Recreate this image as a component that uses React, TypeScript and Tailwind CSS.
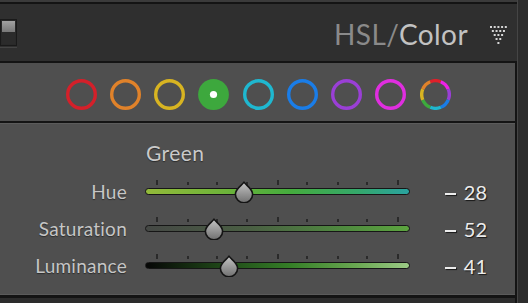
import React from "react";

const font = { fontFamily: "Lato, 'Open Sans', sans-serif" };

function Ring({ color }: { color: string }) {
  return (
    <svg width="31" height="31" viewBox="0 0 31 31">
      <circle cx="15.5" cy="15.5" r="13.8" fill="none" stroke={color} strokeWidth="3.4" />
    </svg>
  );
}

function GreenSel() {
  return (
    <svg width="31" height="31" viewBox="0 0 31 31">
      <circle cx="15.5" cy="15.5" r="15.4" fill="#3da83d" />
      <circle cx="15.5" cy="15.5" r="3.6" fill="#ffffff" />
    </svg>
  );
}

function AllRing() {
  const cols = ["#e0202a", "#ee22e6", "#9a3fd6", "#1a7de8", "#1fb8d0", "#3daa3d", "#d8b421", "#e0822a"];
  const r = 13.8;
  const segs = cols.map((c, i) => {
    const a0 = ((i * 45 - 22.5 - 90) * Math.PI) / 180;
    const a1 = ((i * 45 + 22.5 - 90) * Math.PI) / 180;
    const x0 = 15.5 + r * Math.cos(a0);
    const y0 = 15.5 + r * Math.sin(a0);
    const x1 = 15.5 + r * Math.cos(a1);
    const y1 = 15.5 + r * Math.sin(a1);
    return (
      <path
        key={i}
        d={`M${x0} ${y0} A${r} ${r} 0 0 1 ${x1} ${y1}`}
        fill="none"
        stroke={c}
        strokeWidth="3.4"
      />
    );
  });
  return (
    <svg width="31" height="31" viewBox="0 0 31 31">
      {segs}
    </svg>
  );
}

function Triangle() {
  const dots: React.ReactNode[] = [];
  for (let row = 0; row < 5; row++) {
    const n = 5 - row;
    for (let i = 0; i < n; i++) {
      dots.push(
        <rect key={`${row}-${i}`} x={row * 1.85 + i * 3.7} y={row * 4} width="2" height="2" fill="#d6d6d6" />
      );
    }
  }
  return (
    <svg width="17" height="18" viewBox="0 0 17 18">
      {dots}
    </svg>
  );
}

function Thumb() {
  return (
    <svg width="22" height="22" viewBox="0 0 22 22">
      <defs>
        <linearGradient id="tg" x1="0" y1="0" x2="0" y2="1">
          <stop offset="0" stopColor="#c4c4c4" />
          <stop offset="1" stopColor="#707070" />
        </linearGradient>
      </defs>
      <path
        d="M11 1.2 C12.8 4.2 19.6 7.4 19.6 13.2 A8.6 8.6 0 0 1 2.4 13.2 C2.4 7.4 9.2 4.2 11 1.2 Z"
        fill="url(#tg)"
        stroke="#141414"
        strokeWidth="1.6"
        strokeLinejoin="round"
      />
    </svg>
  );
}

const ticks = [12, 43, 72, 102, 133, 162, 193, 222, 253];

function SliderRow({
  label,
  value,
  gradient,
  pos,
}: {
  label: string;
  value: string;
  gradient: string;
  pos: number;
}) {
  return (
    <div className="flex h-[37px] items-center">
      <div
        className="w-[127px] text-right text-[19px] leading-[20px] tracking-[0.25px] text-[#c6c6c6]"
        style={{ ...font, textShadow: "0 1px 1px rgba(0,0,0,0.45)" }}
      >
        {label}
      </div>
      <div className="relative ml-[18px] flex h-[37px] w-[265px] items-center">
        <div className="h-[7px] w-full rounded-full border border-[#161616]" style={{ background: gradient }} />
        {ticks.map((t, i) => {
          const tall = i === 0 || i === 4 || i === 8;
          return (
            <div
              key={t}
              className={
                tall
                  ? "absolute top-[7px] h-[5px] w-[2px] bg-[#2a2a2a]"
                  : "absolute top-[9px] h-[3px] w-[2px] bg-[#2a2a2a]"
              }
              style={{ left: t - 1 }}
            />
          );
        })}
        <div className="absolute top-[7.5px]" style={{ left: pos - 11 }}>
          <Thumb />
        </div>
      </div>
      <div
        className="flex w-[77px] items-center justify-end text-[20px] leading-[20px] text-[#ececec]"
        style={{ ...font, textShadow: "1px 1px 1px rgba(0,0,0,0.7)" }}
      >
        <span className="mr-[8px] mt-[5px] inline-block h-[2px] w-[11px] bg-[#ececec] shadow-[1px_1px_1px_rgba(0,0,0,0.7)]" />
        <span>{value}</span>
      </div>
    </div>
  );
}

export default function App() {
  return (
    <div className="flex h-[303px] w-[528px] overflow-hidden bg-[#2c2c2c]">
      <div className="flex w-[517px] flex-col">
        <div className="h-[2px] bg-[#3b3b3b]" />
        <div className="h-[2px] bg-[#141414]" />
        <div className="relative flex h-[57px] items-center justify-end bg-[#2f2f2f] pr-[10px]">
          <div className="absolute left-0 top-[15px] h-[29px] w-[17px] border-b border-[#444444]">
            <div className="flex h-[27px] w-[17px] flex-col border border-[#1a1a1a] bg-[#292929] p-[1px]">
              <div className="h-[11px] w-full bg-gradient-to-b from-[#a2a2a2] to-[#787878]" />
              <div className="flex-1 bg-[#2b2b2b]" />
            </div>
          </div>
          <div className="mt-[3px] text-[28px] leading-[28px] tracking-[0.4px]" style={font}>
            <span className="text-[#8a8a8a]">HSL</span>
            <span className="text-[#8a8a8a]">/</span>
            <span className="text-[#c2c2c2]">Color</span>
          </div>
          <div className="ml-[22px] mt-[4px] flex">
            <Triangle />
          </div>
        </div>
        <div className="h-[2px] bg-[#141414]" />
        <div className="flex flex-1 flex-col border-r-2 border-[#141414]">
          <div className="flex h-[58px] items-center gap-[13.25px] bg-[#4f4f4f] pl-[65.5px] pt-[4px]">
            <Ring color="#d4202a" />
            <Ring color="#e0822a" />
            <Ring color="#d8b421" />
            <GreenSel />
            <Ring color="#1fb8d0" />
            <Ring color="#1a7de8" />
            <Ring color="#9a3fd6" />
            <Ring color="#e02ee0" />
            <AllRing />
          </div>
          <div className="h-[2px] bg-[#141414]" />
          <div className="h-[172px] border-y border-[#5b5b5b] bg-[#4f4f4f] pt-[18px]">
            <div
              className="ml-[146px] h-[21px] text-[21px] leading-[21px] tracking-[0.4px] text-[#cacaca]"
              style={{ ...font, textShadow: "0 1px 1px rgba(0,0,0,0.45)" }}
            >
              Green
            </div>
            <div className="mt-[10px]">
              <SliderRow
                label="Hue"
                value="28"
                pos={99}
                gradient="linear-gradient(to right, #93ba3a 0%, #6db33a 30%, #45ac3e 55%, #35a86a 80%, #2aa3a0 100%)"
              />
              <SliderRow
                label="Saturation"
                value="52"
                pos={69}
                gradient="linear-gradient(to right, #454845 0%, #4a5f43 40%, #4f8a3f 75%, #5ca43f 100%)"
              />
              <SliderRow
                label="Luminance"
                value="41"
                pos={84}
                gradient="linear-gradient(to right, #060606 0%, #1c3f16 25%, #357f27 55%, #6aa852 80%, #9ccb86 100%)"
              />
            </div>
          </div>
          <div className="h-[3px] bg-[#141414]" />
          <div className="flex-1 bg-[#2c2c2c]" />
        </div>
      </div>
      <div className="flex-1 border-l border-[#454545] bg-[#2c2c2c]" />
    </div>
  );
}
